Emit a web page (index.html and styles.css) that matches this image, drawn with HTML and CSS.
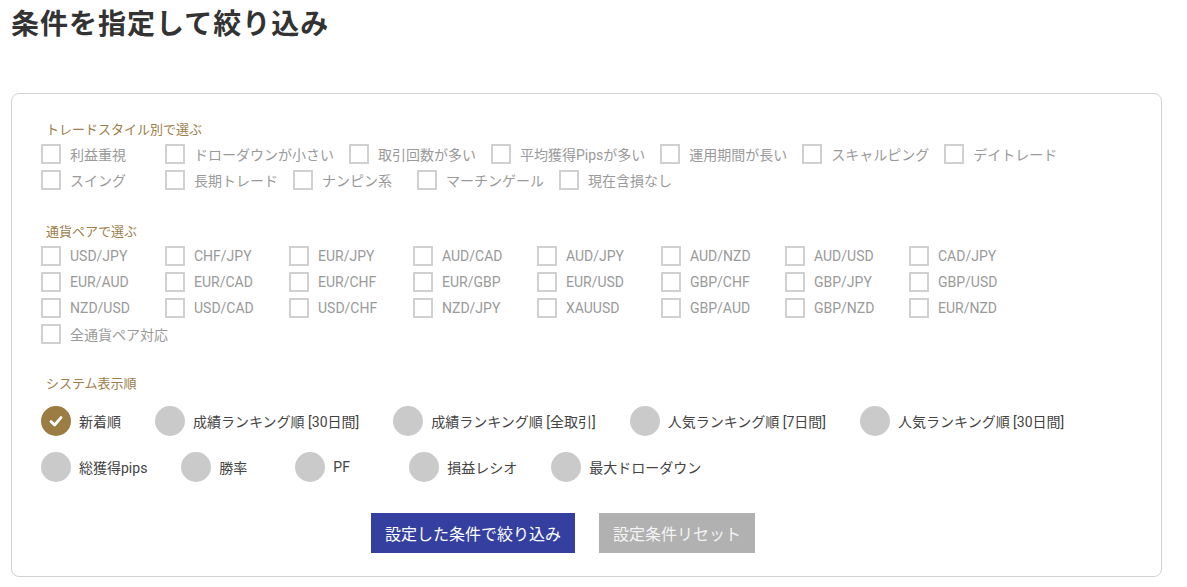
FILE: index.html
```html
<!DOCTYPE html>
<html lang="ja">
<head>
<meta charset="utf-8">
<link rel="stylesheet" href="styles.css">
</head>
<body>
<h1 class="title">条件を指定して絞り込み</h1>
<div class="panel">
  <div class="group">
    <div class="group-label">トレードスタイル別で選ぶ</div>
    <div class="checks">
      <label class="chk"><span class="box"></span><span>利益重視</span></label>
      <label class="chk"><span class="box"></span><span>ドローダウンが小さい</span></label>
      <label class="chk"><span class="box"></span><span>取引回数が多い</span></label>
      <label class="chk"><span class="box"></span><span>平均獲得Pipsが多い</span></label>
      <label class="chk"><span class="box"></span><span>運用期間が長い</span></label>
      <label class="chk"><span class="box"></span><span>スキャルピング</span></label>
      <label class="chk"><span class="box"></span><span>デイトレード</span></label>
      <label class="chk"><span class="box"></span><span>スイング</span></label>
      <label class="chk"><span class="box"></span><span>長期トレード</span></label>
      <label class="chk"><span class="box"></span><span>ナンピン系</span></label>
      <label class="chk"><span class="box"></span><span>マーチンゲール</span></label>
      <label class="chk"><span class="box"></span><span>現在含損なし</span></label>
    </div>
  </div>
  <div class="group group-pair">
    <div class="group-label">通貨ペアで選ぶ</div>
    <div class="checks pairs">
      <label class="chk"><span class="box"></span><span>USD/JPY</span></label>
      <label class="chk"><span class="box"></span><span>CHF/JPY</span></label>
      <label class="chk"><span class="box"></span><span>EUR/JPY</span></label>
      <label class="chk"><span class="box"></span><span>AUD/CAD</span></label>
      <label class="chk"><span class="box"></span><span>AUD/JPY</span></label>
      <label class="chk"><span class="box"></span><span>AUD/NZD</span></label>
      <label class="chk"><span class="box"></span><span>AUD/USD</span></label>
      <label class="chk"><span class="box"></span><span>CAD/JPY</span></label>
      <label class="chk"><span class="box"></span><span>EUR/AUD</span></label>
      <label class="chk"><span class="box"></span><span>EUR/CAD</span></label>
      <label class="chk"><span class="box"></span><span>EUR/CHF</span></label>
      <label class="chk"><span class="box"></span><span>EUR/GBP</span></label>
      <label class="chk"><span class="box"></span><span>EUR/USD</span></label>
      <label class="chk"><span class="box"></span><span>GBP/CHF</span></label>
      <label class="chk"><span class="box"></span><span>GBP/JPY</span></label>
      <label class="chk"><span class="box"></span><span>GBP/USD</span></label>
      <label class="chk"><span class="box"></span><span>NZD/USD</span></label>
      <label class="chk"><span class="box"></span><span>USD/CAD</span></label>
      <label class="chk"><span class="box"></span><span>USD/CHF</span></label>
      <label class="chk"><span class="box"></span><span>NZD/JPY</span></label>
      <label class="chk"><span class="box"></span><span>XAUUSD</span></label>
      <label class="chk"><span class="box"></span><span>GBP/AUD</span></label>
      <label class="chk"><span class="box"></span><span>GBP/NZD</span></label>
      <label class="chk"><span class="box"></span><span>EUR/NZD</span></label>
      <label class="chk"><span class="box"></span><span>全通貨ペア対応</span></label>
    </div>
  </div>
  <div class="group group-sort">
    <div class="group-label">システム表示順</div>
    <div class="radios">
      <label class="rad"><span class="dot checked"><svg width="16" height="16" viewBox="0 0 16 16"><path d="M3 8.5 L6.6 12 L13 4.6" fill="none" stroke="#fff" stroke-width="2.8" stroke-linecap="round" stroke-linejoin="round"/></svg></span><span>新着順</span></label>
      <label class="rad"><span class="dot"></span><span>成績ランキング順 [30日間]</span></label>
      <label class="rad"><span class="dot"></span><span>成績ランキング順 [全取引]</span></label>
      <label class="rad"><span class="dot"></span><span>人気ランキング順 [7日間]</span></label>
      <label class="rad"><span class="dot"></span><span>人気ランキング順 [30日間]</span></label>
      <label class="rad"><span class="dot"></span><span>総獲得pips</span></label>
      <label class="rad"><span class="dot"></span><span>勝率</span></label>
      <label class="rad"><span class="dot"></span><span>PF</span></label>
      <label class="rad"><span class="dot"></span><span>損益レシオ</span></label>
      <label class="rad"><span class="dot"></span><span>最大ドローダウン</span></label>
    </div>
  </div>
  <div class="actions">
    <button class="btn btn-primary">設定した条件で絞り込み</button>
    <button class="btn btn-reset">設定条件リセット</button>
  </div>
</div>
</body>
</html>
```

FILE: styles.css
```css
* { box-sizing: border-box; }
body {
  margin: 0;
  padding: 0 25px 0 11px;
  background: #fff;
  font-family: Roboto, "Noto Sans CJK JP", sans-serif;
  color: #333;
}
.title {
  margin: 0;
  padding-top: 2px;
  font-family: "Noto Sans CJK JP", sans-serif;
  font-size: 28px;
  line-height: 40px;
  font-weight: 700;
  letter-spacing: 1px;
  color: #333;
}
.panel {
  margin-top: 51px;
  border: 1px solid #d2d2d2;
  border-radius: 8px;
  padding: 26px 29px 23px 29px;
}
.group-label {
  margin-left: 5px;
  font-size: 13px;
  line-height: 20px;
  color: #9c7e4a;
  margin-bottom: 1px;
}
.group-pair { margin-top: 29px; }
.group-sort { margin-top: 27px; }
.checks {
  display: flex;
  flex-wrap: wrap;
}
.chk {
  display: flex;
  align-items: center;
  height: 26px;
  min-width: 109px;
  margin-right: 15px;
  font-size: 14px;
  color: #9a9a9a;
}
.box {
  width: 20px;
  height: 20px;
  border: 2px solid #d0d0d0;
  margin-right: 9px;
  flex: none;
}
.radios {
  display: flex;
  flex-wrap: wrap;
  row-gap: 16px;
  margin-top: 12px;
}
.rad {
  display: flex;
  align-items: center;
  height: 30px;
  min-width: 80px;
  margin-right: 34px;
  font-size: 14px;
  color: #444;
}
.dot {
  width: 30px;
  height: 30px;
  border-radius: 50%;
  background: #cacaca;
  margin-right: 8px;
  flex: none;
  display: flex;
  align-items: center;
  justify-content: center;
}
.dot.checked { background: #9b7c43; }
.actions {
  display: flex;
  justify-content: center;
  gap: 24px;
  margin-top: 31px;
  padding-right: 47px;
}
.btn {
  height: 40px;
  border: none;
  padding: 0 14px;
  font-family: "Noto Sans CJK JP", sans-serif;
  font-size: 16px;
  color: #fff;
  cursor: pointer;
}
.btn-primary { background: #343fa0; }
.btn-reset { background: #b1b1b1; color: #f4f4f4; }
```
